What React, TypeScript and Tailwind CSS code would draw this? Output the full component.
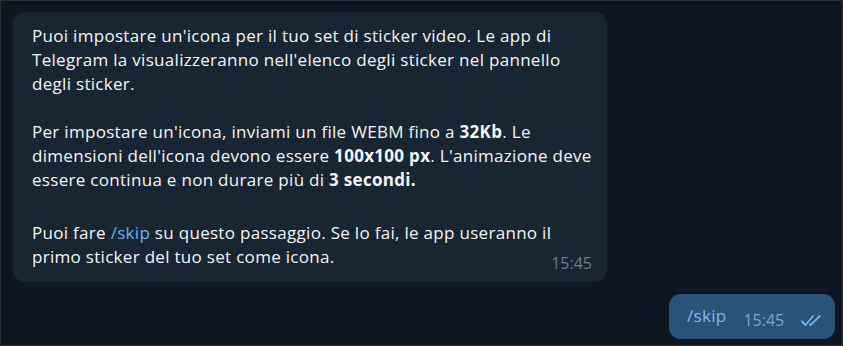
export default function App() {
  return (
    <div
      className="w-[843px] h-[346px] bg-[#0e1621] border border-[#2a3038] flex flex-col px-3 pt-[11px] overflow-hidden"
      style={{ fontFamily: '"Open Sans", "Noto Sans", sans-serif' }}
    >
      {/* incoming */}
      <div className="w-[594px] bg-[#182533] rounded-xl pl-[19px] pr-[15px] pt-[12px] pb-[7px] text-[17px] tracking-[0.3px] leading-[24px] text-[#f5f5f5]">
        <p>
          Puoi impostare un'icona per il tuo set di sticker video. Le app di
          <br />
          Telegram la visualizzeranno nell'elenco degli sticker nel pannello
          <br />
          degli sticker.
        </p>
        <p className="mt-6">
          Per impostare un'icona, inviami un file WEBM fino a <b>32Kb</b>. Le
          <br />
          dimensioni dell'icona devono essere <b>100x100 px</b>. L'animazione deve
          <br />
          essere continua e non durare più di <b>3 secondi.</b>
        </p>
        <p className="mt-[29px]">
          Puoi fare <span className="text-[#6ab2f2]">/skip</span> su questo passaggio. Se lo fai, le app useranno il
          <br />
          primo sticker del tuo set come icona.
          <span className="float-right mt-[6px] text-[16px] tracking-normal text-[#6d7f8f]">15:45</span>
        </p>
      </div>

      {/* outgoing */}
      <div className="self-end mt-[12px] mr-[-5px] w-[166px] h-[45px] bg-[#2b5278] rounded-xl flex items-center pl-[18px] pr-[7px] pt-[2px]">
        <span className="text-[17px] tracking-[0.3px] leading-[24px] text-[#7fbbef] -mt-[4px]">/skip</span>
        <span className="ml-[17px] text-[16px] text-[#7da8d3] leading-[20px] mt-[4px]">15:45</span>
        <svg width="28" height="16" viewBox="0 0 28 16" fill="none" className="ml-auto mt-[4px]">
          <path d="M2 9.5l3.5 3.5L13 4" stroke="#6cb6f0" strokeWidth="1.8" strokeLinecap="round" strokeLinejoin="round" />
          <path d="M10 12.5l.5.5L20 4" stroke="#6cb6f0" strokeWidth="1.8" strokeLinecap="round" strokeLinejoin="round" />
        </svg>
      </div>
    </div>
  )
}
